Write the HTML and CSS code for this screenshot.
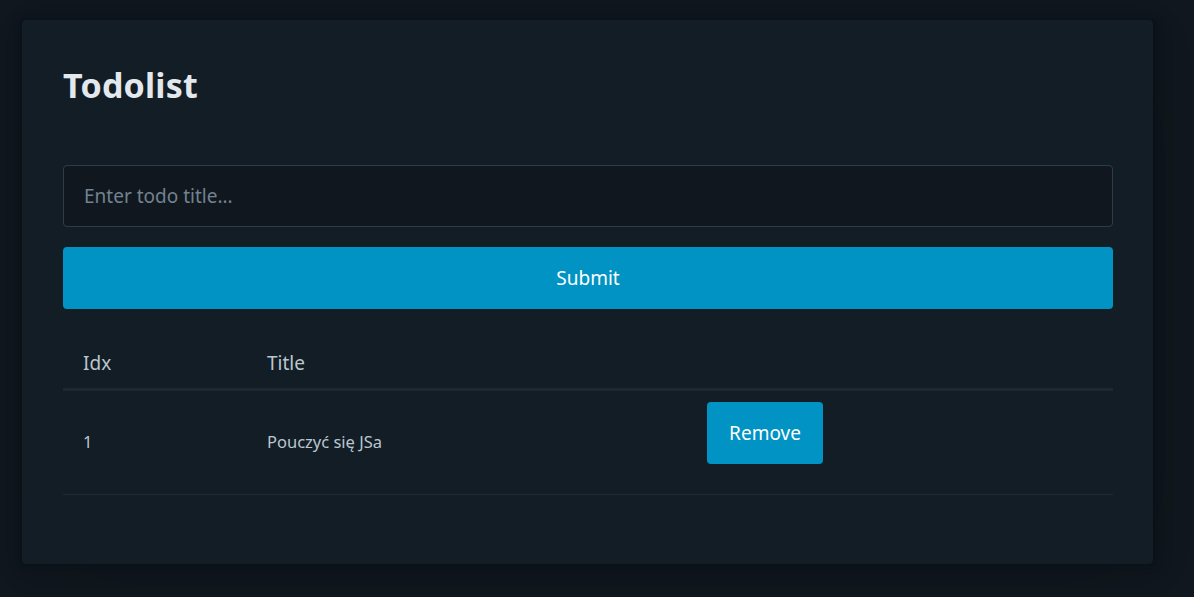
FILE: index.html
```html
<!DOCTYPE html>
<html lang="pl">
<head>
<meta charset="utf-8">
<title>Todolist</title>
<link rel="stylesheet" href="styles.css">
</head>
<body>
<main class="page">
  <article class="card">
    <h1 class="title">Todolist</h1>
    <form class="todo-form">
      <input class="todo-input" type="text" placeholder="Enter todo title...">
      <button class="btn btn-block" type="button">Submit</button>
    </form>
    <table class="todo-table">
      <colgroup>
        <col class="col-idx">
        <col class="col-title">
        <col class="col-action">
      </colgroup>
      <thead>
        <tr><th>Idx</th><th>Title</th><th></th></tr>
      </thead>
      <tbody>
        <tr>
          <td class="cell-small">1</td>
          <td class="cell-small">Pouczyć się JSa</td>
          <td><button class="btn btn-remove" type="button">Remove</button></td>
        </tr>
      </tbody>
    </table>
  </article>
</main>
</body>
</html>
```
FILE: styles.css
```css
* { box-sizing: border-box; }
html, body { margin: 0; padding: 0; }
body {
  background: #11181f;
  color: #bbc6ce;
  font-family: "Noto Sans", "Open Sans", sans-serif;
  font-size: 19px;
  line-height: 1.5;
  height: 597px;
  overflow: hidden;
}
.page {
  padding: 20px 41px 0 22px;
}
.card {
  background: #121d26;
  border-radius: 4px;
  padding: 43px 40px 51px 41px;
  height: 544px;
  box-shadow:
    0.3px 0.6px 3.3px rgba(0,0,0,0.02),
    0.6px 1.3px 7.6px rgba(0,0,0,0.03),
    1.2px 2.4px 14px rgba(0,0,0,0.04),
    2.1px 4.3px 26px rgba(0,0,0,0.05),
    4px 8px 48px rgba(0,0,0,0.06),
    9.5px 19px 114px rgba(0,0,0,0.09),
    0 0 0 1.2px rgba(0,0,0,0.02);
}
.title {
  margin: 0;
  font-size: 34px;
  font-weight: 700;
  line-height: 44px;
  color: #e3e8ed;
  letter-spacing: 0.2px;
}
.todo-form {
  margin-top: 58px;
  display: flex;
  flex-direction: column;
  gap: 20px;
}
.todo-input {
  height: 62px;
  width: 100%;
  background: #11171e;
  border: 1px solid #2d3c48;
  border-radius: 4px;
  padding: 0 20px;
  font-family: inherit;
  font-size: 19px;
  color: #bbc6ce;
  outline: none;
}
.todo-input::placeholder { color: #718390; }
.btn {
  background: #0093c3;
  color: #ffffff;
  border: 0;
  border-radius: 4px;
  font-family: inherit;
  font-size: 19px;
  height: 62px;
  cursor: pointer;
}
.btn-block { width: 100%; }
.btn-remove {
  width: 116px;
  margin-bottom: 19px;
  display: block;
}
.todo-table {
  margin-top: 31px;
  width: 100%;
  border-collapse: collapse;
  table-layout: fixed;
}
.col-idx { width: 184px; }
.col-title { width: 440px; }
.todo-table th {
  text-align: left;
  font-weight: 400;
  font-size: 19px;
  color: #bbc6ce;
  padding: 9px 20px 10px;
  height: 49px;
  border-bottom: 3px solid #1d2832;
}
.todo-table td {
  padding: 11px 20px;
  border-bottom: 1px solid #1c2a36;
  vertical-align: middle;
}
.cell-small {
  font-size: 16.5px;
  color: #bbc6ce;
}
```
